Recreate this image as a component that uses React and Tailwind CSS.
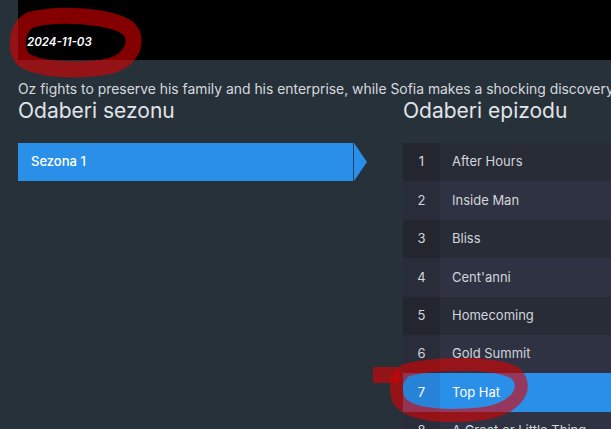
import React from "react";

const episodes = [
  "After Hours",
  "Inside Man",
  "Bliss",
  "Cent'anni",
  "Homecoming",
  "Gold Summit",
  "Top Hat",
  "A Great or Little Thing",
];

function EpisodeRow({ num, title, active }) {
  const even = num % 2 === 0;
  let rowBg = even ? "bg-[#2e3242]" : "bg-[#282c37]";
  let numBg = even ? "bg-[#292c39]" : "bg-[#23262f]";
  if (active) {
    rowBg = "bg-[#2a8fe8]";
    numBg = "bg-[#2783d8]";
  }
  return (
    <div className={`flex h-[38.4px] items-center ${rowBg}`}>
      <div className={`flex h-full w-[37px] shrink-0 items-center justify-center text-[13px] ${numBg} ${active ? "text-white" : "text-[#d2d6dc]"}`}>
        {num}
      </div>
      <div className={`pl-[12px] text-[13px] whitespace-nowrap ${active ? "text-white" : "text-[#d2d6dc]"}`}>{title}</div>
    </div>
  );
}

export default function App() {
  return (
    <div className="relative h-[429px] overflow-hidden bg-[#27313a] pl-[18px] font-['Inter',sans-serif]">
      <div className="flex h-[60px] items-end bg-black pb-[9px] pl-[9px]">
        <span className="text-[11.5px] font-semibold italic text-white">2024-11-03</span>
      </div>

      <p className="mt-[20px] whitespace-nowrap text-[13.9px] leading-[18px] text-[#d5d9de]">
        Oz fights to preserve his family and his enterprise, while Sofia makes a shocking discovery.
      </p>

      <div className="flex">
        <div className="w-[385px] shrink-0">
          <h2 className="text-[21px] leading-[26px] text-[#e1e4e8]">Odaberi sezonu</h2>
          <div className="mt-[19px] flex h-[38px]">
            <div className="flex w-[335px] items-center bg-[#2a8fe8] pl-[13px] text-[13px] font-medium text-white">
              Sezona 1
            </div>
            <div className="w-[1px] bg-[#1d3f60]" />
            <svg width="13" height="38" viewBox="0 0 13 38" className="block">
              <polygon points="0,0 13,19 0,38" fill="#2a8fe8" />
            </svg>
          </div>
        </div>

        <div className="min-w-0 flex-1">
          <h2 className="text-[21px] leading-[26px] text-[#e1e4e8]">Odaberi epizodu</h2>
          <div className="mt-[19px]">
            {episodes.map((t, i) => (
              <EpisodeRow key={t} num={i + 1} title={t} active={i === 6} />
            ))}
          </div>
        </div>
      </div>

      <svg className="pointer-events-none absolute inset-0" width="611" height="429" viewBox="0 0 611 429">
        <g stroke="rgb(220,0,0)" strokeOpacity="0.6" fill="none">
          <path d="M30 20 C60 12 110 16 128 28 C140 40 132 60 110 66 C80 72 40 70 24 60 C14 50 16 28 30 20 Z" strokeWidth="16" />
          <path d="M406 370 C440 362 500 362 516 374 C530 388 516 410 480 414 C440 418 404 414 398 398 C394 386 398 376 406 370 Z" strokeWidth="13" />
        </g>
        <rect x="373" y="367" width="26" height="16" fill="rgb(220,0,0)" fillOpacity="0.6" />
      </svg>
    </div>
  );
}
